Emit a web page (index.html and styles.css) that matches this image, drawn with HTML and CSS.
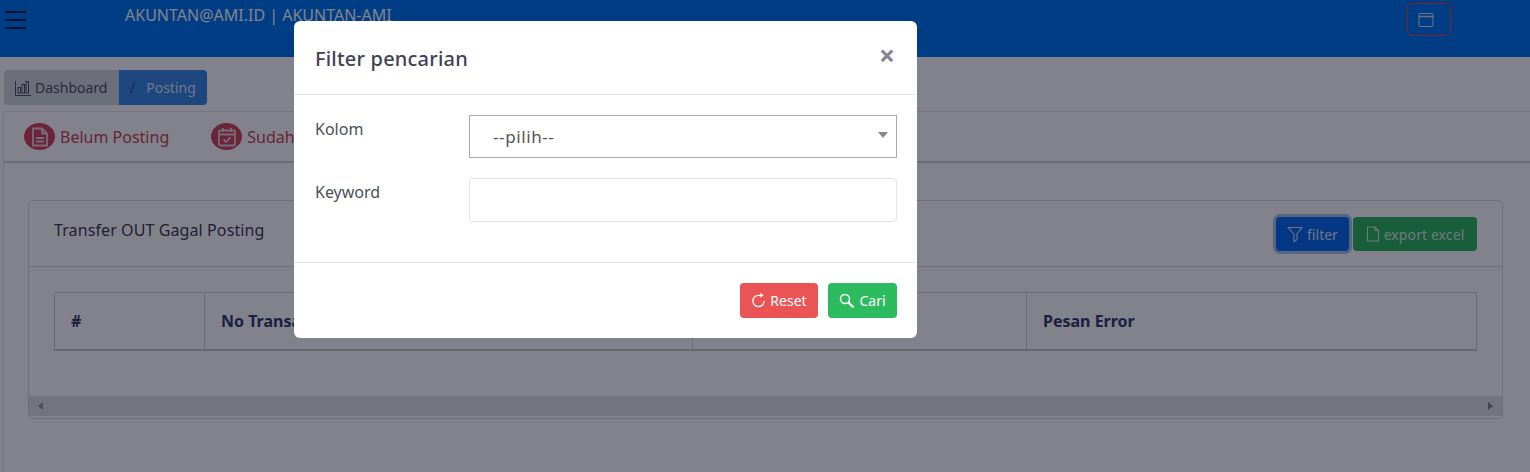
FILE: index.html
```html
<!DOCTYPE html>
<html lang="id">
<head>
  <meta charset="UTF-8" />
  <meta name="viewport" content="width=device-width, initial-scale=1.0" />
  <title>Posting</title>
  <link rel="stylesheet" href="styles.css">
</head>
<body>
  <header class="topbar">
    <button class="burger" type="button" aria-label="menu"><span></span><span></span><span></span></button>
    <div class="user">AKUNTAN@AMI.ID | AKUNTAN-AMI</div>
    <button class="window-btn" type="button" aria-label="window">
      <svg width="16" height="16" viewBox="0 0 16 16" fill="none" stroke="currentColor"><rect x="1" y="1.5" width="14" height="13" rx="1"/><path d="M1 4.5h14" stroke-width="1.5"/></svg>
    </button>
  </header>

  <nav class="crumbs">
    <a class="crumb crumb-home" href="#">
      <svg width="16" height="16" viewBox="0 0 16 16" fill="none" stroke="currentColor"><path d="M.5 1v14.5H16"/><rect x="3" y="7.5" width="2.5" height="5.5"/><rect x="7" y="4.5" width="2.5" height="8.5"/><rect x="11" y="1.5" width="2.5" height="11.5"/></svg>
      Dashboard
    </a>
    <a class="crumb crumb-active" href="#"><span class="slash">/</span> Posting</a>
  </nav>

  <div class="tabs">
    <a class="tab" href="#">
      <span class="tab-icon">
        <svg width="18" height="20" viewBox="0 0 18 20" fill="none" stroke="#e8d5da" stroke-width="1.8"><path d="M2 1.5h9l5 5v12H2z"/><path d="M11 1.5v5h5"/><path d="M5 11h8M5 14.5h8" stroke-width="2"/></svg>
      </span>
      Belum Posting
    </a>
    <a class="tab" href="#">
      <span class="tab-icon">
        <svg width="20" height="20" viewBox="0 0 20 20" fill="none" stroke="#e8d5da" stroke-width="1.8"><rect x="2" y="3.5" width="16" height="15" rx="1"/><path d="M2 7.5h16M6 1v4M14 1v4"/><path d="M6.5 12.5l2.5 2.5 4.5-4.5"/></svg>
      </span>
      Sudah Posting
    </a>
  </div>

  <main class="content">
    <section class="card">
      <div class="card-head">
        <h3 class="card-title">Transfer OUT Gagal Posting</h3>
        <div class="card-actions">
          <button class="btn btn-filter" type="button">
            <svg width="16" height="16" viewBox="0 0 16 16" fill="none" stroke="currentColor" stroke-width="1.1"><path d="M1 1.5h14L10 8v5.5l-3 2V8z" stroke-linejoin="round"/></svg>
            filter
          </button>
          <button class="btn btn-export" type="button">
            <svg width="14" height="16" viewBox="0 0 14 16" fill="none" stroke="currentColor" stroke-width="1.1"><path d="M1.5 1h7.5l3.5 3.5V15h-11z"/><path d="M9 1v3.5h3.5"/></svg>
            export excel
          </button>
        </div>
      </div>
      <div class="card-body">
        <table class="grid">
          <thead>
            <tr>
              <th class="col-no">#</th>
              <th class="col-trans">No Transaksi</th>
              <th class="col-date">Tanggal</th>
              <th>Pesan Error</th>
            </tr>
          </thead>
        </table>
      </div>
      <div class="hscroll">
        <span class="arrow arrow-left"></span>
        <span class="arrow arrow-right"></span>
      </div>
    </section>
  </main>

  <div class="backdrop"></div>

  <div class="modal">
    <div class="modal-head">
      <h4 class="modal-title">Filter pencarian</h4>
      <span class="modal-close">×</span>
    </div>
    <div class="modal-body">
      <div class="field">
        <label class="field-label">Kolom</label>
        <div class="select">--pilih--<span class="caret"></span></div>
      </div>
      <div class="field">
        <label class="field-label">Keyword</label>
        <input class="input" type="text" />
      </div>
    </div>
    <div class="modal-foot">
      <button class="btn btn-reset" type="button">
        <svg width="15" height="15" viewBox="0 0 16 16" fill="none" stroke="currentColor" stroke-width="1.4"><path d="M14 8.5A6 6 0 1 1 8 2.5h3"/><path d="M10 0l3.5 2.5L10 5z" fill="currentColor" stroke="none"/></svg>
        Reset
      </button>
      <button class="btn btn-cari" type="button">
        <svg width="16" height="16" viewBox="0 0 16 16" fill="none" stroke="currentColor"><circle cx="6" cy="6" r="4.5" stroke-width="1.5"/><path d="M9.5 9.5l5 5" stroke-width="2.4"/></svg>
        Cari
      </button>
    </div>
  </div>
</body>
</html>
```

FILE: styles.css
```css
/* Reset and base styles */
* {
  box-sizing: border-box;
  margin: 0;
  padding: 0;
}
html, body {
  height: 472px;
  overflow: hidden;
}
body {
  font-family: "Noto Sans", "Open Sans", Arial, sans-serif;
  font-size: 15px;
  background: #fff;
  color: #3f4254;
  position: relative;
}
a {
  text-decoration: none;
}
button {
  font-family: inherit;
  border: none;
}

/* Top bar */
.topbar {
  height: 57px;
  background: #0078ef;
  display: flex;
  align-items: flex-start;
}
.burger {
  width: 21px;
  margin: 11px 0 0 5px;
  background: none;
  display: flex;
  flex-direction: column;
  gap: 6px;
}
.burger span {
  height: 2px;
  background: #14264f;
}
.user {
  margin: 4px 0 0 99px;
  font-size: 16px;
  color: #fff;
  white-space: nowrap;
  flex: 1;
}
.window-btn {
  width: 44px;
  height: 33px;
  margin: 3px 79px 0 0;
  padding-right: 7px;
  background: none;
  border: 1px solid #ff4040;
  border-radius: 5px;
  color: #d7e3f0;
  display: flex;
  align-items: center;
  justify-content: center;
}

/* Breadcrumb */
.crumbs {
  display: flex;
  width: 203px;
  height: 35px;
  margin: 13px 0 0 4px;
  font-size: 14px;
  line-height: 35px;
}
.crumb {
  display: flex;
  align-items: center;
  white-space: nowrap;
}
.crumb-home {
  width: 115px;
  padding-left: 11px;
  gap: 4px;
  background: #d5d7dc;
  color: #50555f;
  border-radius: 4px 0 0 4px;
}
.crumb-active {
  width: 88px;
  padding-left: 11px;
  background: #3b8ae6;
  color: #dbe8fb;
  border-radius: 0 4px 4px 0;
}
.slash {
  color: #3d4f6f;
  margin-right: 11px;
}

/* Tabs */
.tabs {
  height: 52px;
  margin: 6px 0 0 3px;
  padding-left: 20px;
  display: flex;
  align-items: center;
  gap: 42px;
  border: 1px solid #e6e6ec;
  border-bottom: 2px solid #d6d6de;
  border-right: none;
  border-radius: 4px 0 0 0;
}
.tab {
  display: flex;
  align-items: center;
  gap: 5px;
  font-size: 16px;
  color: #c9485c;
  white-space: nowrap;
}
.tab-icon {
  width: 31px;
  height: 27px;
  border-radius: 50%;
  background: #d4485e;
  display: flex;
  align-items: center;
  justify-content: center;
}

/* Main content */
.content {
  height: 310px;
  margin-left: 3px;
  padding: 37px 27px 0 24px;
  border-left: 1px solid #e6e6ec;
}
.card {
  height: 219px;
  border: 1px solid #d8d8e0;
  border-radius: 5px;
  position: relative;
}
.card-head {
  height: 66px;
  padding: 14px 25px 0;
  display: flex;
  justify-content: space-between;
  border-bottom: 1px solid #d8d8e0;
}
.card-title {
  font-size: 16px;
  font-weight: 400;
  line-height: 30px;
  letter-spacing: 0.1px;
}
.card-actions {
  display: flex;
  gap: 4px;
  height: 34px;
  margin-top: 2px;
}
.btn {
  height: 100%;
  border-radius: 4px;
  font-size: 14px;
  color: #fff;
  display: flex;
  align-items: center;
  justify-content: center;
  gap: 4px;
}
.btn-filter {
  width: 73px;
  background: #0a6ff0;
  color: #dce8f8;
  box-shadow: 0 0 0 3px #a6c8f0;
}
.btn-export {
  width: 124px;
  background: #2fb860;
  color: #dcefe3;
  letter-spacing: 0.1px;
}
.card-body {
  padding: 25px 25px 0;
}
.grid {
  width: 100%;
  height: 59px;
  border-collapse: collapse;
  table-layout: fixed;
  border: 1px solid #d2d2da;
  border-bottom: 2px solid #c8c8d2;
}
.grid th {
  text-align: left;
  font-size: 16px;
  font-weight: 700;
  color: #3a3f6a;
  padding-left: 16px;
  border-right: 1px solid #d2d2da;
}
.col-no {
  width: 150px;
}
.col-trans {
  width: 488px;
}
.col-date {
  width: 334px;
}
.hscroll {
  position: absolute;
  left: 0;
  right: 0;
  bottom: 2px;
  height: 20px;
  background: #e4e4e8;
  display: flex;
  align-items: center;
  justify-content: space-between;
  padding: 0 9px;
}
.arrow {
  border-top: 4.5px solid transparent;
  border-bottom: 4.5px solid transparent;
}
.arrow-left {
  border-right: 5px solid #9a9aa0;
}
.arrow-right {
  border-left: 5px solid #85858b;
}

/* Modal */
.backdrop {
  position: absolute;
  inset: 0;
  background: rgba(0, 0, 20, 0.49);
}
.modal {
  position: absolute;
  left: 294px;
  top: 21px;
  width: 623px;
  height: 317px;
  background: #fff;
  border-radius: 6px;
  font-size: 16px;
}
.modal-head {
  height: 74px;
  padding: 1px 21px 0;
  display: flex;
  align-items: center;
  justify-content: space-between;
  border-bottom: 1px solid #e3e6ea;
}
.modal-title {
  font-size: 20px;
  font-weight: 500;
  color: #3f4254;
  letter-spacing: 0.2px;
}
.modal-close {
  font-size: 28px;
  font-weight: 700;
  color: #85878e;
  line-height: 1;
  margin: -6px 1px 0 0;
}
.modal-body {
  height: 168px;
  padding: 20px 20px 0 21px;
  display: flex;
  flex-direction: column;
  gap: 20px;
  border-bottom: 1px solid #e3e6ea;
}
.field {
  display: flex;
  align-items: flex-start;
}
.field-label {
  width: 154px;
  margin-top: 2px;
  color: #495057;
  line-height: 24px;
}
.select {
  width: 428px;
  height: 43px;
  border: 1px solid #a9a9a9;
  padding-left: 23px;
  font-size: 17px;
  letter-spacing: 0.6px;
  line-height: 41px;
  color: #555;
  position: relative;
}
.caret {
  position: absolute;
  right: 8px;
  top: 16px;
  border-left: 5px solid transparent;
  border-right: 5px solid transparent;
  border-top: 6px solid #888;
}
.input {
  width: 428px;
  height: 44px;
  border: 1px solid #e0e3e7;
  border-radius: 4px;
  outline: none;
}
.modal-foot {
  height: 75px;
  padding: 20px 20px 20px;
  display: flex;
  justify-content: flex-end;
  gap: 10px;
}
.btn-reset {
  width: 78px;
  background: #ea5455;
}
.btn-cari {
  width: 69px;
  background: #2dbb60;
}
```
